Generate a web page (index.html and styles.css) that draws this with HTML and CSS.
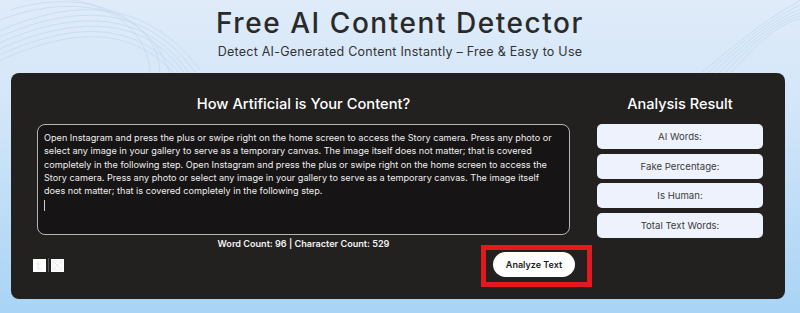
FILE: index.html
```html
<!DOCTYPE html>
<html lang="en">
<head>
<meta charset="utf-8">
<title>Free AI Content Detector</title>
<link rel="stylesheet" href="styles.css">
</head>
<body>
<div class="page">
  <svg class="deco" width="800" height="313" viewBox="0 0 800 313" aria-hidden="true">
    <g fill="none" stroke="#b5cfea" stroke-width="0.6" opacity="0.75">
      <path d="M-20 40 C 60 0, 140 -10, 200 70"/>
      <path d="M-20 46 C 60 6, 140 -4, 195 72"/>
      <path d="M-20 52 C 60 12, 140 2, 190 74"/>
      <path d="M-20 58 C 60 18, 140 8, 185 74"/>
      <path d="M-20 64 C 60 24, 130 14, 180 74"/>
      <path d="M-20 70 C 60 30, 125 20, 175 74"/>
      <path d="M0 20 C 80 -10, 150 10, 170 74"/>
      <path d="M10 10 C 90 -15, 160 20, 160 74"/>
      <path d="M30 0 C 100 -10, 150 30, 150 74"/>
      <path d="M700 74 C 730 50, 760 20, 820 -10"/>
      <path d="M706 74 C 736 48, 766 18, 820 -4"/>
      <path d="M712 74 C 742 46, 772 16, 820 2"/>
      <path d="M718 74 C 748 44, 778 14, 820 8"/>
      <path d="M724 74 C 754 42, 784 12, 820 14"/>
      <path d="M730 74 C 760 40, 790 10, 820 20"/>
    </g>
  </svg>
  <header class="hero">
    <h1 class="title">Free AI Content Detector</h1>
    <p class="subtitle">Detect AI-Generated Content Instantly – Free &amp; Easy to Use</p>
  </header>
  <main class="card">
    <section class="input-col">
      <h2 class="col-heading">How Artificial is Your Content?</h2>
      <div class="editor">
        <div class="line">Open Instagram and press the plus or swipe right on the home screen to access the Story camera. Press any photo or</div>
        <div class="line">select any image in your gallery to serve as a temporary canvas. The image itself does not matter; that is covered</div>
        <div class="line">completely in the following step. Open Instagram and press the plus or swipe right on the home screen to access the</div>
        <div class="line">Story camera. Press any photo or select any image in your gallery to serve as a temporary canvas. The image itself</div>
        <div class="line">does not matter; that is covered completely in the following step.</div>
        <div class="line"><span class="caret"></span></div>
      </div>
      <p class="counts">Word Count: 96 | Character Count: 529</p>
      <div class="actions">
        <div class="tools">
          <span class="tool">
            <svg width="13" height="13" viewBox="0 0 13 13"><path d="M5 3 V10 H9 M3.5 5 H8" stroke="#e8e8e8" stroke-width="1.2" fill="none"/></svg>
          </span>
          <span class="tool-sep"></span>
          <span class="tool">
            <svg width="13" height="13" viewBox="0 0 13 13"><path d="M2.5 2.5 L10.5 10.5 M10.5 2.5 L2.5 10.5" stroke="#e6e6e6" stroke-width="1" fill="none"/><rect x="2" y="2" width="9" height="9" stroke="#ececec" stroke-width="0.8" fill="none"/></svg>
          </span>
        </div>
        <div class="analyze-wrap">
          <button class="analyze">Analyze Text</button>
        </div>
      </div>
    </section>
    <aside class="result-col">
      <h2 class="col-heading">Analysis Result</h2>
      <div class="results">
        <div class="result">AI Words:</div>
        <div class="result">Fake Percentage:</div>
        <div class="result">Is Human:</div>
        <div class="result">Total Text Words:</div>
      </div>
    </aside>
  </main>
</div>
</body>
</html>
```
FILE: styles.css
```css
* { box-sizing: border-box; }
html, body { margin: 0; padding: 0; }
body {
  width: 800px;
  height: 313px;
  overflow: hidden;
  font-family: "Inter", "Open Sans", sans-serif;
  background: linear-gradient(180deg, #dfebf9 0%, #d3e6f8 35%, #bcdcf6 70%, #a9d4f5 100%);
  color: #2b2b2b;
}
.page {
  position: relative;
  width: 800px;
  height: 313px;
}
.deco {
  position: absolute;
  left: 0;
  top: 0;
  pointer-events: none;
}
.hero {
  position: relative;
  text-align: center;
  padding-top: 7px;
}
.title {
  margin: 0;
  font-size: 28px;
  line-height: 32px;
  font-weight: 500;
  color: #2a2a2a;
  letter-spacing: 1.55px;
}
.subtitle {
  margin: 5px 0 0;
  font-size: 12.5px;
  line-height: 16px;
  font-weight: 400;
  color: #333;
  letter-spacing: 0.25px;
}
.card {
  position: relative;
  margin: 13px 15px 0 11px;
  background: #232120;
  border-radius: 8px;
  padding: 22px 22px 22px 26px;
  display: grid;
  grid-template-columns: 533px 166px;
  column-gap: 27px;
}
.col-heading {
  margin: 0 0 11px;
  text-align: center;
  color: #fff;
  font-size: 14.7px;
  line-height: 18px;
  font-weight: 500;
}
.result-col .col-heading { font-size: 14.5px; }
.editor {
  height: 111px;
  background: #161414;
  border: 1px solid #b5b5b5;
  border-radius: 8px;
  padding: 6px 6px 0 6px;
  color: #f0f0f0;
  font-size: 9.15px;
  line-height: 13.3px;
}
.line {
  white-space: nowrap;
  height: 13.3px;
}
.caret {
  display: inline-block;
  width: 1px;
  height: 11px;
  background: #cfcfcf;
  vertical-align: middle;
  margin-top: 2px;
}
.counts {
  margin: 3px 0 0;
  text-align: center;
  color: #f2f2f2;
  font-size: 9.1px;
  line-height: 12px;
  font-weight: 600;
}
.actions {
  margin-top: 2px;
  display: flex;
  justify-content: space-between;
  align-items: flex-start;
}
.tools {
  margin-top: 6px;
  margin-left: -4px;
  display: flex;
  align-items: center;
  gap: 2px;
}
.tool {
  width: 13px;
  height: 13px;
  background: #fff;
  display: block;
}
.tool svg { display: block; }
.tool-sep {
  width: 1px;
  height: 14px;
  background: #555;
}
.analyze-wrap {
  position: relative;
  margin-left: auto;
  width: 82px;
  margin-right: -5px;
}
.analyze-wrap::after {
  content: "";
  position: absolute;
  left: -12px;
  top: -7px;
  right: -17px;
  bottom: -10px;
  border: 5px solid #e3191f;
  pointer-events: none;
}
.analyze {
  display: block;
  width: 82px;
  height: 25px;
  border: none;
  border-radius: 13px;
  background: #fff;
  color: #1d1d1d;
  font-family: inherit;
  font-size: 9px;
  font-weight: 600;
  padding: 0;
  cursor: pointer;
}
.results {
  display: flex;
  flex-direction: column;
  gap: 4.5px;
}
.result {
  height: 25px;
  line-height: 25px;
  background: #eef2fd;
  border-radius: 5px;
  text-align: center;
  color: #3a3a3a;
  font-size: 9.6px;
}
```
